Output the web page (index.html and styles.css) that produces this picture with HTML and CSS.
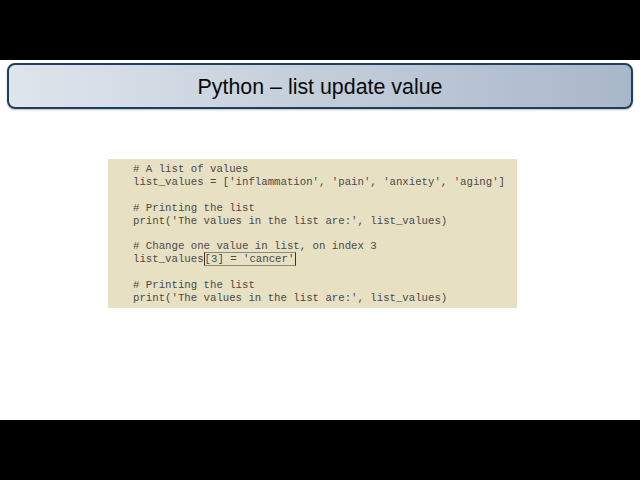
FILE: index.html
```html
<!DOCTYPE html>
<html>
<head>
<meta charset="utf-8">
<link rel="stylesheet" href="styles.css">
</head>
<body>
<div class="bar"></div>
<main class="slide">
  <header class="title"><h1>Python – list update value</h1></header>
  <pre class="code"><span class="c"># A list of values</span>
list_values = ['inflammation', 'pain', 'anxiety', 'aging']

<span class="c"># Printing the list</span>
print('The values in the list are:', list_values)

<span class="c"># Change one value in list, on index 3</span>
list_values<span class="hl">[3] = 'cancer'</span>

<span class="c"># Printing the list</span>
print('The values in the list are:', list_values)</pre>
</main>
<div class="bar"></div>
</body>
</html>
```
FILE: styles.css
```css
html, body {
  margin: 0;
  padding: 0;
  background: #000;
  width: 640px;
  height: 480px;
  overflow: hidden;
}
.bar {
  height: 60px;
  background: #000;
}
.slide {
  height: 360px;
  background: #fff;
  padding: 3px 7px 0 7px;
  box-sizing: border-box;
  display: flex;
  flex-direction: column;
}
.title {
  height: 46px;
  box-sizing: border-box;
  border: 2px solid #1d3f5e;
  border-radius: 8px;
  background: linear-gradient(to right, #dfe5ed 0%, #c6d0dc 45%, #a9b7ca 100%);
  display: flex;
  align-items: center;
  justify-content: center;
  box-shadow: 0 1px 2px rgba(0,0,0,0.25);
}
.title h1 {
  margin: 0;
  font-family: "Liberation Sans", Arial, sans-serif;
  font-weight: normal;
  font-size: 21.4px;
  color: #0a0a0a;
  padding-top: 3px;
}
.code {
  margin: 50px 0 0 101px;
  width: 409px;
  height: 149px;
  box-sizing: border-box;
  padding: 4px 0 0 25px;
  background: #e8e0c2;
  font-family: "Liberation Mono", "Courier New", monospace;
  font-size: 10.7px;
  line-height: 12.9px;
  color: #4a4a4a;
  white-space: pre;
}
.hl {
  border: 1px solid #8a8a80;
  border-left-color: #333;
  border-right-color: #333;
  padding: 0 1px 0 0;
}
```
